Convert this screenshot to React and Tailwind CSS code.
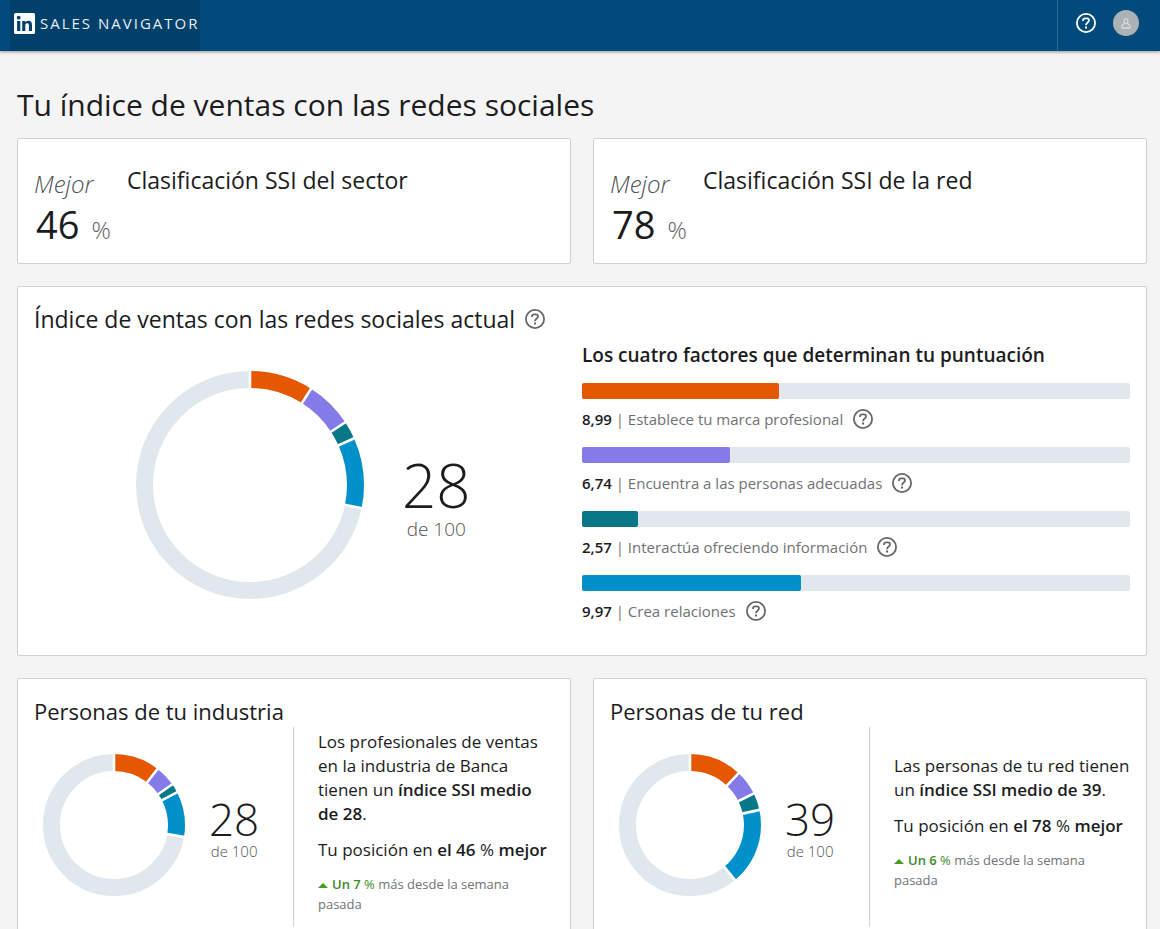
const COLORS = ["#e65800", "#847be8", "#087889", "#0091ca"];

const factors = [
  { value: "8,99", score: 8.99, label: "Establece tu marca profesional", bar: "bg-[#e65800]" },
  { value: "6,74", score: 6.74, label: "Encuentra a las personas adecuadas", bar: "bg-[#847be8]" },
  { value: "2,57", score: 2.57, label: "Interactúa ofreciendo información", bar: "bg-[#087889]" },
  { value: "9,97", score: 9.97, label: "Crea relaciones", bar: "bg-[#0091ca]" },
];

function HelpButton({ label, className = "" }) {
  return (
    <button type="button" aria-label={label} className={`shrink-0 ${className}`}>
      <svg className="w-6 h-6" viewBox="0 0 24 24" fill="none" stroke="currentColor" strokeWidth="1.8">
        <circle cx="12" cy="12" r="9.1" />
        <path d="M9 10V9.4A2.2 2.2 0 0 1 11.2 7.4h1.6A2.2 2.2 0 0 1 15 9.6c0 1.9-3 1.9-3 4.6" />
        <path d="M11 15.6h2v2h-2z" fill="currentColor" stroke="none" />
      </svg>
    </button>
  );
}

function Donut({ size, values, className }) {
  const center = size / 2;
  const thickness = 17;
  const r = center - thickness / 2;
  const starts = values.map((_, i) => values.slice(0, i).reduce((a, b) => a + b, 0));
  const total = values.reduce((a, b) => a + b, 0);

  return (
    <svg className={`shrink-0 ${className}`} viewBox={`0 0 ${size} ${size}`} fill="none" aria-hidden="true">
      <g transform={`rotate(-90 ${center} ${center})`}>
        <circle cx={center} cy={center} r={r} stroke="#e1e8ed" strokeWidth={thickness} />
        {values.map((value, i) => (
          <circle
            key={i}
            cx={center}
            cy={center}
            r={r}
            pathLength="100"
            stroke={COLORS[i]}
            strokeWidth={thickness}
            strokeDasharray={`${value} ${100 - value}`}
            strokeDashoffset={-starts[i]}
          />
        ))}
        {/* white gaps between the segments */}
        {[...starts, total].map((start) => (
          <path
            key={start}
            d={`M${center + r - 10} ${center}h20`}
            stroke="#fff"
            strokeWidth="2.6"
            transform={`rotate(${start * 3.6} ${center} ${center})`}
          />
        ))}
      </g>
    </svg>
  );
}

function Header() {
  return (
    <header className="flex h-[51px] justify-between bg-[#004b7c] pl-[10px] shadow-[0_1px_3px_rgba(0,0,0,0.4)]">
      <a href="#" className="flex w-[190px] items-center gap-[5px] bg-[#00406a] pl-1 pb-1 text-[#e6eef4]">
        <svg className="w-[21px] h-[21px] shrink-0" viewBox="0 0 21 21" aria-hidden="true">
          <rect width="21" height="21" rx="1.5" fill="#fff" />
          <g fill="#00406a">
            <circle cx="4.7" cy="4.7" r="1.9" />
            <path d="M3.1 8h3.2v10H3.1zM8.2 8h3v1.4c.5-.9 1.6-1.7 3.1-1.7 3 0 3.7 2 3.7 4.6V18h-3.1v-5c0-1.3-.1-2.7-1.7-2.7s-1.9 1.3-1.9 2.6V18H8.2z" />
          </g>
        </svg>
        <span className="text-[15px] tracking-[2px] whitespace-nowrap">SALES NAVIGATOR</span>
      </a>
      <div className="flex items-center gap-[15px] border-l border-[#2b6a94] pl-4 pr-[21px] pb-[5px]">
        <HelpButton label="Ayuda" className="text-white" />
        <button type="button" aria-label="Tu perfil" className="flex w-[26px] h-[26px] items-center justify-center rounded-full bg-[#acb1b5]">
          <svg className="w-[10px] h-[11px]" viewBox="0 0 10 11" fill="none" stroke="#d9dcde" strokeWidth="1.3">
            <rect x="3.2" y="0.8" width="3.6" height="4.8" rx="1.7" />
            <path d="M3.500 5.600 1 7.600V10h8V7.600L6.500 5.600" />
          </svg>
        </button>
      </div>
    </header>
  );
}

function RankCard({ title, percent }) {
  return (
    <section className="flex rounded-xs border border-[#cfd1d3] bg-white px-4 pt-[29px] pb-[15px]">
      <div className="w-[93px] shrink-0">
        <p className="text-2xl leading-8 font-light italic text-[#4f5254]">Mejor</p>
        <p className="flex items-baseline gap-3 pl-[2px] text-[38px] leading-[48px]">
          {percent}
          <span className="text-2xl leading-6 font-light text-[#5f6264]">%</span>
        </p>
      </div>
      <h2 className="text-[23px] leading-6">{title}</h2>
    </section>
  );
}

function PeopleCard({ title, score, values, children, change }) {
  return (
    <section className="rounded-xs border border-[#cfd1d3] bg-white px-4 pt-4 pb-8">
      <h2 className="text-[22px] leading-8">{title}</h2>
      <div className="flex h-[200px]">
        <div className="flex w-[260px] shrink-0 items-center gap-6 border-r border-[#cfd1d3] pl-[9px] pb-1">
          <Donut size={142} values={values} className="w-[142px] h-[142px]" />
          <p className="flex flex-col items-center pt-2">
            <span className="text-[44px] leading-[44px] font-light">{score}</span>
            <span className="text-[15px] leading-5 font-light text-[#4f5254]">de 100</span>
          </p>
        </div>
        <div className="flex flex-1 flex-col justify-center gap-3 pl-6 pb-[10px] text-[17px] leading-6">
          {children}
          <p className="text-[13px] leading-5 text-[#6f7274]">
            <svg className="mr-1 inline w-[10px] h-[5px] align-middle" viewBox="0 0 10 5" aria-hidden="true">
              <path d="M0 5 5 0l5 5z" fill="#469a1f" />
            </svg>
            <span className="text-[#3d8a2a]"><b className="font-semibold">Un {change}</b> %</span> más desde la semana pasada
          </p>
        </div>
      </div>
    </section>
  );
}

function App() {
  return (
    <div className="min-h-screen bg-[#f4f4f4] font-['Open_Sans','Noto_Sans',sans-serif] text-[#1b1c1d]">
      <Header />
      <main className="pl-[17px] pr-[13px] pt-[30px] pb-8">
        <h1 className="text-[30px] leading-[48px]">Tu índice de ventas con las redes sociales</h1>

        <div className="mt-[9px] grid grid-cols-2 gap-[22px]">
          <RankCard title="Clasificación SSI del sector" percent="46" />
          <RankCard title="Clasificación SSI de la red" percent="78" />

          <section className="col-span-2 rounded-xs border border-[#cfd1d3] bg-white p-4">
            <div className="flex h-8 items-center gap-2">
              <h2 className="text-[23px] leading-8">Índice de ventas con las redes sociales actual</h2>
              <HelpButton label="Acerca del índice" className="text-[#666]" />
            </div>
            <div className="grid grid-cols-2">
              <div className="flex items-center gap-[38px] pl-[102px] pb-1">
                <Donut size={228} values={factors.map((f) => f.score)} className="w-[228px] h-[228px]" />
                <p className="flex flex-col items-center pt-7">
                  <span className="text-[60px] leading-[60px] font-light">28</span>
                  <span className="text-[19px] leading-7 font-light text-[#4f5254]">de 100</span>
                </p>
              </div>
              <div>
                <h3 className="pt-1 text-[19px] leading-8 font-semibold">Los cuatro factores que determinan tu puntuación</h3>
                <ul className="pt-3">
                  {factors.map((f) => (
                    <li key={f.label} className="h-16">
                      <div className="h-4 rounded-xs bg-[#e1e8ed]">
                        <div className={`h-4 rounded-xs ${f.bar}`} style={{ width: `${f.score * 4}%` }} />
                      </div>
                      <div className="flex h-10 items-center gap-2 text-[15px] text-[#6f7274]">
                        <p><b className="font-semibold text-[#1b1c1d]">{f.value}</b> | {f.label}</p>
                        <HelpButton label={f.label} className="text-[#666]" />
                      </div>
                    </li>
                  ))}
                </ul>
              </div>
            </div>
          </section>

          <PeopleCard title="Personas de tu industria" score="28" values={[10.5, 4.8, 2.1, 10.3]} change="7">
            <p>Los profesionales de ventas en la industria de Banca tienen un <b className="font-semibold">índice SSI medio de 28</b>.</p>
            <p>Tu posición en <b className="font-semibold">el 46</b> % <b className="font-semibold">mejor</b></p>
          </PeopleCard>
          <PeopleCard title="Personas de tu red" score="39" values={[12, 5.7, 3.9, 17.5]} change="6">
            <p>Las personas de tu red tienen un <b className="font-semibold">índice SSI medio de 39</b>.</p>
            <p>Tu posición en <b className="font-semibold">el 78</b> % <b className="font-semibold">mejor</b></p>
          </PeopleCard>
        </div>
      </main>
    </div>
  );
}

export default App;
